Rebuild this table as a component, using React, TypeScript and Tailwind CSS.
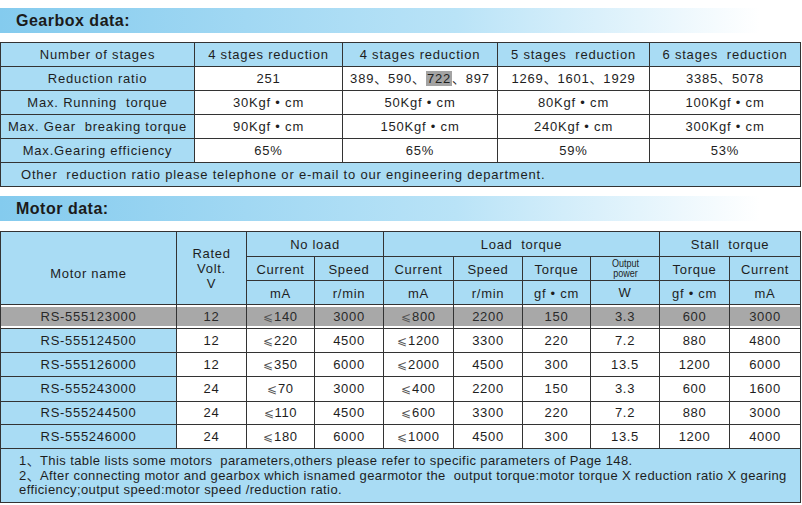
import React from "react";

const FONT = "font-['Liberation_Sans','Noto_Sans_CJK_SC','DejaVu_Sans',sans-serif]";
const BLUE = "bg-[#a9dcf4]";
const LINE = "border border-[#333333]";

function SectionTitle({ children }: { children: React.ReactNode }) {
  return (
    <div className="h-[25px] w-[760px] bg-gradient-to-r from-[#84cbee] via-[#b9e3f7] via-60% to-white flex items-center pl-[16px]">
      <span className="text-[16px] font-bold tracking-[0.5px] text-[#1b1b1b]">{children}</span>
    </div>
  );
}

const GEAR_HEAD = ["4 stages reduction", "4 stages reduction", "5 stages  reduction", "6 stages  reduction"];

const GEAR_ROWS: { label: string; cells: React.ReactNode[] }[] = [
  {
    label: "Reduction ratio",
    cells: [
      "251",
      <>
        389、590、<span className="bg-[#a3a3a3] px-[1px]">722</span>、897
      </>,
      "1269、1601、1929",
      "3385、5078",
    ],
  },
  { label: "Max. Running  torque", cells: ["30Kgf • cm", "50Kgf • cm", "80Kgf • cm", "100Kgf • cm"] },
  { label: "Max. Gear  breaking torque", cells: ["90Kgf • cm", "150Kgf • cm", "240Kgf • cm", "300Kgf • cm"] },
  { label: "Max.Gearing efficiency", cells: ["65%", "65%", "59%", "53%"] },
];

type Motor = { name: string; v: string; data: string[]; hl?: boolean };

const MOTORS: Motor[] = [
  { name: "RS-555123000", v: "12", data: ["⩽140", "3000", "⩽800", "2200", "150", "3.3", "600", "3000"], hl: true },
  { name: "RS-555124500", v: "12", data: ["⩽220", "4500", "⩽1200", "3300", "220", "7.2", "880", "4800"] },
  { name: "RS-555126000", v: "12", data: ["⩽350", "6000", "⩽2000", "4500", "300", "13.5", "1200", "6000"] },
  { name: "RS-555243000", v: "24", data: ["⩽70", "3000", "⩽400", "2200", "150", "3.3", "600", "1600"] },
  { name: "RS-555244500", v: "24", data: ["⩽110", "4500", "⩽600", "3300", "220", "7.2", "880", "3000"] },
  { name: "RS-555246000", v: "24", data: ["⩽180", "6000", "⩽1000", "4500", "300", "13.5", "1200", "4000"] },
];

function GearboxTable() {
  const cell = `${LINE} p-0 text-center align-middle whitespace-pre`;
  return (
    <table className="table-fixed border-collapse w-[800px] text-[13px] tracking-[0.8px]">
      <colgroup>
        <col className="w-[194px]" />
        <col className="w-[148px]" />
        <col className="w-[155px]" />
        <col className="w-[152px]" />
        <col className="w-[151px]" />
      </colgroup>
      <tbody>
        <tr className="h-[24px]">
          <td className={`${cell} ${BLUE}`}>Number of stages</td>
          {GEAR_HEAD.map((h, i) => (
            <td key={i} className={`${cell} ${BLUE}`}>
              {h}
            </td>
          ))}
        </tr>
        {GEAR_ROWS.map((r) => (
          <tr key={r.label} className="h-[24px]">
            <td className={`${cell} ${BLUE}`}>{r.label}</td>
            {r.cells.map((c, i) => (
              <td key={i} className={`${cell} bg-white`}>
                {c}
              </td>
            ))}
          </tr>
        ))}
        <tr className="h-[24px]">
          <td colSpan={5} className={`${LINE} ${BLUE} p-0 pl-[20px] text-left align-middle whitespace-pre`}>
            {"Other  reduction ratio please telephone or e-mail to our engineering department."}
          </td>
        </tr>
      </tbody>
    </table>
  );
}

function MotorTable() {
  const cell = `${LINE} p-0 text-center align-middle whitespace-pre`;
  const widths = ["w-[176px]", "w-[70px]", "w-[68px]", "w-[69px]", "w-[70px]", "w-[69px]", "w-[68px]", "w-[69px]", "w-[70px]", "w-[71px]"];
  return (
    <table className="table-fixed border-collapse w-[800px] text-[13px] tracking-[0.7px]">
      <colgroup>
        {widths.map((w, i) => (
          <col key={i} className={w} />
        ))}
      </colgroup>
      <tbody>
        <tr className="h-[25px]">
          <td rowSpan={3} className={`${LINE} ${BLUE} p-0 pt-[34px] text-center align-top leading-[15px]`}>
            Motor name
          </td>
          <td rowSpan={3} className={`${LINE} ${BLUE} p-0 pt-[14px] text-center align-top leading-[15px]`}>
            Rated
            <br />
            Volt.
            <br />V
          </td>
          <td colSpan={2} className={`${cell} ${BLUE} pt-[2px]`}>
            No load
          </td>
          <td colSpan={4} className={`${cell} ${BLUE} pt-[2px]`}>
            {"Load  torque"}
          </td>
          <td colSpan={2} className={`${cell} ${BLUE} pt-[2px]`}>
            {"Stall  torque"}
          </td>
        </tr>
        <tr className="h-[24px]">
          <td className={`${cell} ${BLUE} pt-[2px]`}>Current</td>
          <td className={`${cell} ${BLUE} pt-[2px]`}>Speed</td>
          <td className={`${cell} ${BLUE} pt-[2px]`}>Current</td>
          <td className={`${cell} ${BLUE} pt-[2px]`}>Speed</td>
          <td className={`${cell} ${BLUE} pt-[2px]`}>Torque</td>
          <td className={`${cell} ${BLUE} text-[11px] leading-[10px] tracking-[0px]`}>
            <div className="inline-block scale-x-[0.82] pb-[2px]">
              Output
              <br />
              power
            </div>
          </td>
          <td className={`${cell} ${BLUE} pt-[2px]`}>Torque</td>
          <td className={`${cell} ${BLUE} pt-[2px]`}>Current</td>
        </tr>
        <tr className="h-[24px]">
          <td className={`${cell} ${BLUE} pt-[2px]`}>mA</td>
          <td className={`${cell} ${BLUE} pt-[2px]`}>r/min</td>
          <td className={`${cell} ${BLUE} pt-[2px]`}>mA</td>
          <td className={`${cell} ${BLUE} pt-[2px]`}>r/min</td>
          <td className={`${cell} ${BLUE} pt-[2px]`}>gf • cm</td>
          <td className={`${cell} ${BLUE}`}>W</td>
          <td className={`${cell} ${BLUE} pt-[2px]`}>gf • cm</td>
          <td className={`${cell} ${BLUE} pt-[2px]`}>mA</td>
        </tr>
        {MOTORS.map((m, idx) => {
          const hl = m.hl;
          const rowCell = hl
            ? `${cell} bg-[#a8a8a8] text-[#2a2a2a] shadow-[inset_0_2px_0_#ffffff,inset_0_-2px_0_#ffffff]`
            : `${cell} bg-white`;
          return (
            <tr key={m.name} className={idx === 3 ? "h-[25px]" : idx === 4 ? "h-[23px]" : "h-[24px]"}>
              <td className={hl ? rowCell : `${cell} ${BLUE}`}>{m.name}</td>
              <td className={rowCell}>{m.v}</td>
              {m.data.map((d, i) => (
                <td key={i} className={rowCell}>
                  {d.startsWith("⩽") ? (
                    <>
                      <span className="font-['DejaVu_Sans',sans-serif] text-[12px] font-light text-[#555]">⩽</span>
                      {d.slice(1)}
                    </>
                  ) : (
                    d
                  )}
                </td>
              ))}
            </tr>
          );
        })}
        <tr className="h-[54px]">
          <td
            colSpan={10}
            className={`${LINE} ${BLUE} p-0 pl-[18px] pt-[5px] text-left align-top whitespace-pre text-[13px] leading-[14.5px] tracking-[0.4px]`}
          >
            {"1、This table lists some motors  parameters,others please refer to specific parameters of Page 148.\n2、After connecting motor and gearbox which isnamed gearmotor the  output torque:motor torque X reduction ratio X gearing\nefficiency;output speed:motor speed /reduction ratio."}
          </td>
        </tr>
      </tbody>
    </table>
  );
}

export default function App() {
  return (
    <div className={`w-[802px] h-[505px] overflow-hidden bg-white text-[#1e1e1e] ${FONT}`}>
      <div className="pt-[8px]">
        <SectionTitle>Gearbox data:</SectionTitle>
      </div>
      <div className="mt-[9px]">
        <GearboxTable />
      </div>
      <div className="mt-[9px]">
        <SectionTitle>Motor data:</SectionTitle>
      </div>
      <div className="mt-[10px]">
        <MotorTable />
      </div>
    </div>
  );
}
